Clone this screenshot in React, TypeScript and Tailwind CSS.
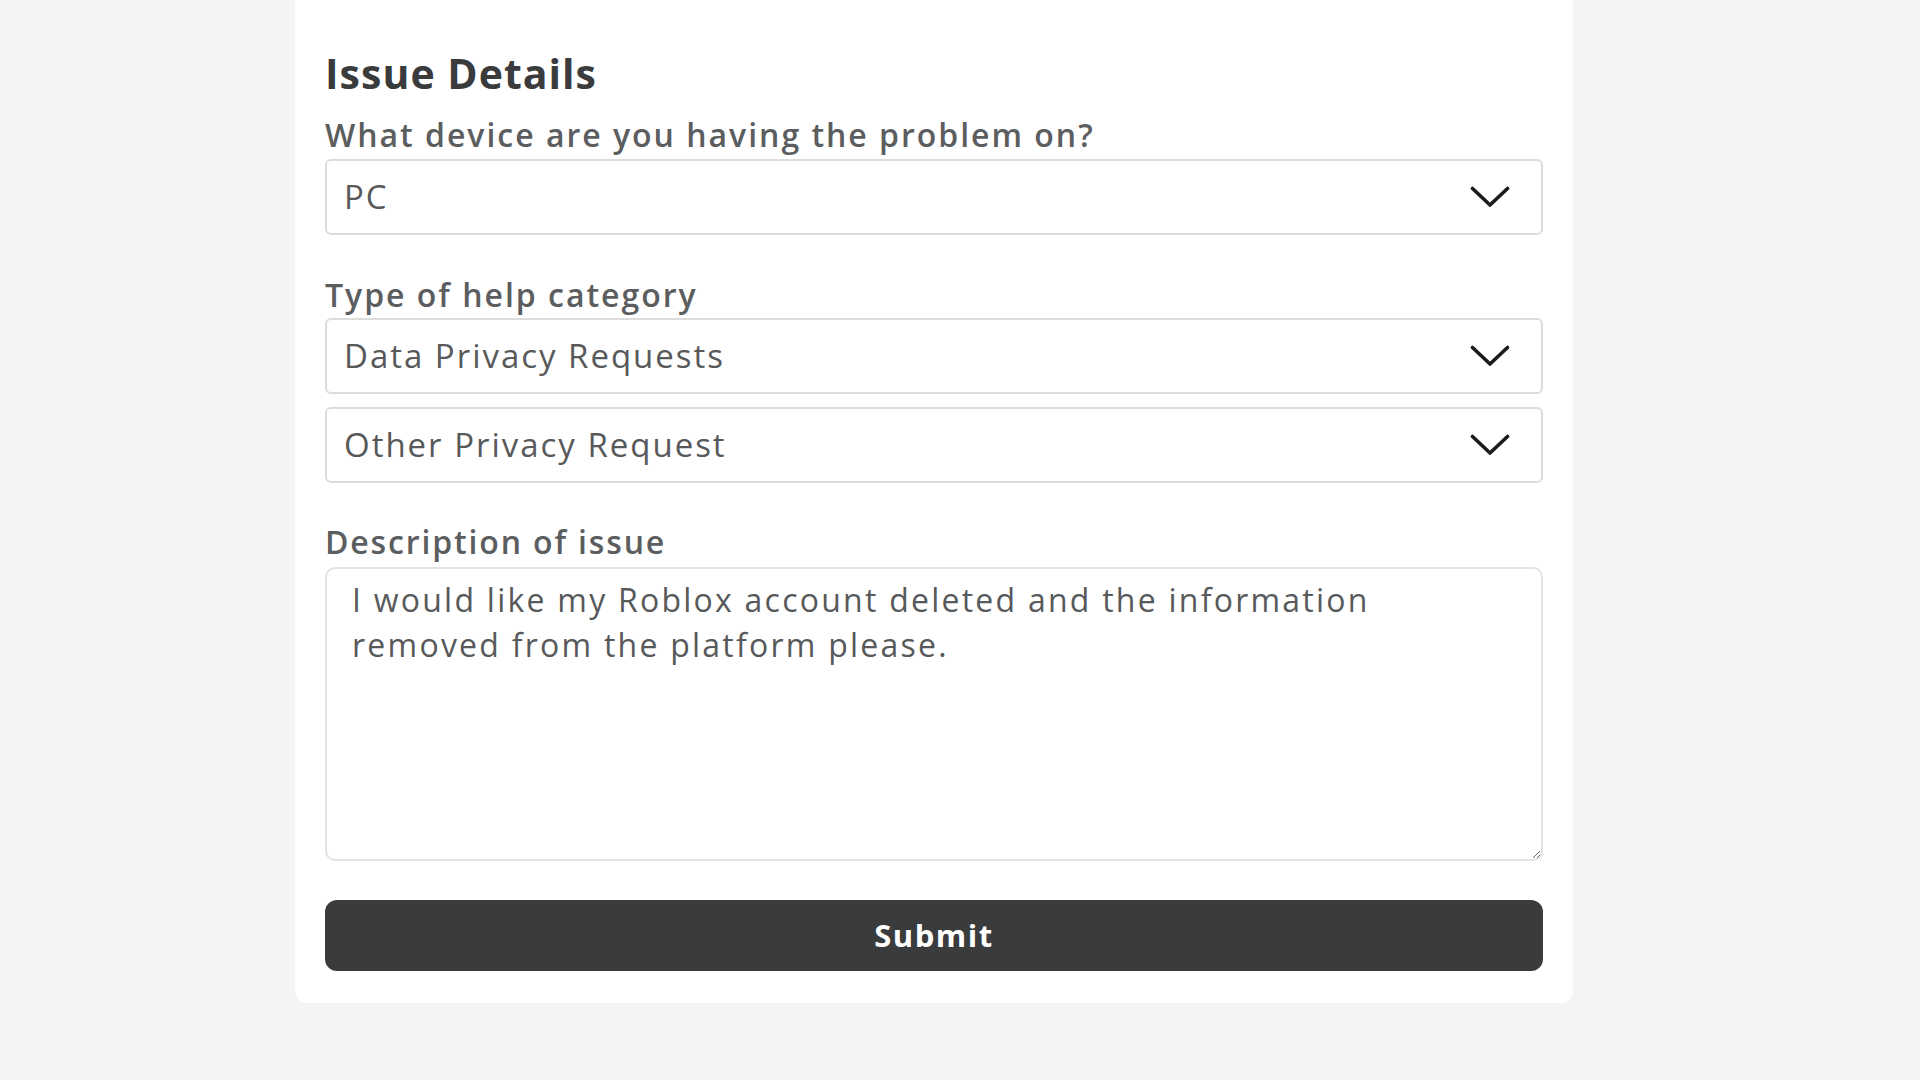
import React from "react";

const Chevron = () => (
  <svg width="40" height="24" viewBox="0 0 40 24" fill="none" className="shrink-0">
    <path d="M2.5 3.5 L20 20 L37.5 3.5" stroke="#1b1b1b" strokeWidth="3.6" strokeLinecap="round" strokeLinejoin="round" />
  </svg>
);

const SelectBox = ({ value }: { value: string }) => (
  <div className="flex h-[76px] items-center justify-between rounded-[6px] border-2 border-[#dcdcdc] bg-white pl-[17px] pr-[31px]">
    <span className="text-[33px] tracking-[0.06em] text-[#58595a]">{value}</span>
    <Chevron />
  </div>
);

export default function App() {
  return (
    <div
      className="min-h-[1080px] w-full bg-[#f2f4f5]"
      style={{ fontFamily: '"Open Sans", "Noto Sans", sans-serif' }}
    >
      <div className="ml-[295px] w-[1278px] rounded-b-[12px] bg-white px-[30px] pb-[32px] pt-[49px]">
        <h1 className="text-[41px] font-bold leading-[48px] tracking-[0.025em] text-[#393b3d]">Issue Details</h1>

        <div className="mt-[20px] text-[32px] font-semibold leading-[36px] tracking-[0.062em] text-[#5b5d5f]">
          What device are you having the problem on?
        </div>
        <div className="mt-[6px]">
          <SelectBox value="PC" />
        </div>

        <div className="mt-[42px] text-[32px] font-semibold leading-[36px] tracking-[0.062em] text-[#5b5d5f]">
          Type of help category
        </div>
        <div className="mt-[5px]">
          <SelectBox value="Data Privacy Requests" />
        </div>
        <div className="mt-[13px]">
          <SelectBox value="Other Privacy Request" />
        </div>

        <div className="mt-[41px] text-[32px] font-semibold leading-[36px] tracking-[0.058em] text-[#5b5d5f]">
          Description of issue
        </div>
        <textarea
          className="mt-[7px] block h-[294px] w-full rounded-[10px] border-2 border-[#e3e3e3] bg-white pb-[10px] pl-[25px] pr-[60px] pt-[8px] text-[32px] leading-[45px] tracking-[0.07em] text-[#58595a] outline-none"
          style={{ fontFamily: '"Open Sans", "Noto Sans", sans-serif' }}
          defaultValue="I would like my Roblox account deleted and the information removed from the platform please."
        />

        <button className="mt-[39px] flex h-[71px] w-full items-center justify-center rounded-[12px] bg-[#393b3d] text-[31px] font-bold tracking-[0.05em] text-white">
          Submit
        </button>
      </div>
    </div>
  );
}
